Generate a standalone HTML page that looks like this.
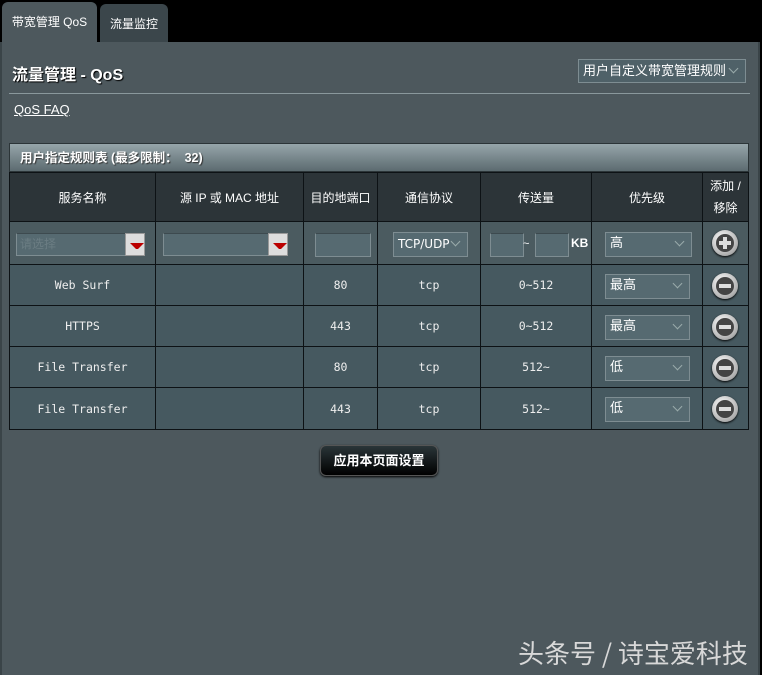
<!DOCTYPE html>
<html><head><meta charset="utf-8"><style>
*{margin:0;padding:0;box-sizing:border-box}
body{width:762px;height:675px;background:#000;position:relative;overflow:hidden;font-family:"Liberation Sans","Noto Sans CJK SC",sans-serif;color:#fff}
.abs{position:absolute}
.tab{position:absolute;top:2px;height:42px;border-radius:6px 6px 0 0;font-size:12px;line-height:40px;text-align:center}
#panel{position:absolute;left:0;top:42px;width:760px;height:633px;background:#4d585d;border-left:2px solid #3a4448;border-right:2px solid #3a4448}
.cell{position:absolute;border-right:1px solid #0d1215;border-bottom:1px solid #0d1215;display:flex;align-items:center;justify-content:center;font-size:12px}
.mono{font-family:"DejaVu Sans Mono","Liberation Mono",monospace;font-size:11.5px;color:#eee}
.sel{position:absolute;background:#566a71;border:1px solid #7e8d92;font-size:13px;color:#fff;padding-left:4px;line-height:20px}
.sel:after{content:"";position:absolute;right:8px;top:5px;width:6px;height:6px;border-right:1px solid #9aa;border-bottom:1px solid #9aa;transform:rotate(45deg)}
.inp{position:absolute;background:#566a71;border:1px solid #7e8d92;border-top-color:#3d4a4f}
.circ{position:absolute;width:26px;height:26px;border-radius:50%;background:radial-gradient(circle at 40% 35%,#fff,#bbb 60%,#888);box-shadow:0 1px 2px #000}
.circ i{position:absolute;left:4px;top:4px;width:18px;height:18px;border-radius:50%;background:#444}
.circ b{position:absolute;left:7px;top:11px;width:12px;height:4px;background:#ddd}
.circ u{position:absolute;left:11px;top:7px;width:4px;height:12px;background:#ddd}
</style></head><body>
<div class="tab" style="left:2px;width:95px;background:#4d585d;">带宽管理 QoS</div>
<div class="tab" style="left:100px;width:68px;background:#3b464b;top:4px;height:40px">流量监控</div>
<div id="panel"></div>
<div class="abs" style="left:12px;top:61px;font-size:16px;font-weight:bold;text-shadow:1px 1px 1px #000">流量管理 - QoS</div>
<div class="sel" style="left:578px;top:59px;width:168px;height:24px;line-height:22px;background:#4f6168">用户自定义带宽管理规则</div>
<div class="abs" style="left:9px;top:93px;width:741px;height:1px;background:#8a989c"></div>
<div class="abs" style="left:14px;top:102px;font-size:13px;text-decoration:underline">QoS FAQ</div>
<div class="abs" style="left:9px;top:143px;width:740px;height:29px;background:linear-gradient(#96a5aa,#5c6b70);border:1px solid #2c3538;font-size:12.5px;font-weight:bold;line-height:28px;padding-left:10px;text-shadow:1px 1px 1px #333">用户指定规则表 (最多限制：&nbsp; 32)</div>
<div class="abs" style="left:9px;top:172px;width:740px;height:258px;border-left:1px solid #0d1215;border-top:1px solid #0d1215"></div>
<div id="t"></div>
<div class="abs" style="left:320px;top:445px;width:118px;height:31px;border-radius:6px;background:linear-gradient(#2a3538,#000);border:1px solid #555;box-shadow:0 1px 2px #000;font-size:13px;font-weight:bold;text-align:center;line-height:30px">应用本页面设置</div>
<div class="abs" style="left:518px;top:634px;font-size:26px;color:#d8d8d8;font-family:'Noto Sans CJK SC',sans-serif">头条号 / 诗宝爱科技</div>
<script>
var cols=[10,156,304,378,481,592,703,749];
var rows=[[173,222,'#2c3438'],[222,265,'#4b5b60'],[265,306,'#465960'],[306,347,'#465960'],[347,388,'#465960'],[388,430,'#465960']];
var hdr=['服务名称','源 IP 或 MAC 地址','目的地端口','通信协议','传送量','优先级','添加 /<br>移除'];
var data=[['Web Surf','','80','tcp','0~512','最高'],['HTTPS','','443','tcp','0~512','最高'],['File Transfer','','80','tcp','512~','低'],['File Transfer','','443','tcp','512~','低']];
var h='';
rows.forEach(function(r,ri){for(var c=0;c<7;c++){var txt='';var cls='cell';
if(ri==0){txt=hdr[c];if(c==6)txt='<span style="line-height:22px;text-align:center">'+txt+'</span>';}
else if(ri>1){var d=data[ri-2];if(c<5){txt=d[c];cls+=' mono';}}
h+='<div class="'+cls+'" style="left:'+cols[c]+'px;top:'+r[0]+'px;width:'+(cols[c+1]-cols[c])+'px;height:'+(r[1]-r[0])+'px;background:'+r[2]+'">'+txt+'</div>';}});
h+='<div class="inp" style="left:16px;top:233px;width:110px;height:23px;color:#6b7d83;font-size:12px;line-height:21px;padding-left:3px">请选择</div><div class="abs" style="left:125px;top:233px;width:20px;height:23px;background:#ddd;border:1px solid #999"><div style="margin:9px 0 0 4px;border-left:6px solid transparent;border-right:6px solid transparent;border-top:6px solid #b00"></div></div>';
h+='<div class="inp" style="left:163px;top:233px;width:106px;height:23px"></div><div class="abs" style="left:268px;top:233px;width:20px;height:23px;background:#ddd;border:1px solid #999"><div style="margin:9px 0 0 4px;border-left:6px solid transparent;border-right:6px solid transparent;border-top:6px solid #b00"></div></div>';
h+='<div class="inp" style="left:315px;top:233px;width:56px;height:24px"></div>';
h+='<div class="sel" style="left:393px;top:232px;width:75px;height:25px;line-height:23px;font-size:12px;overflow:hidden;white-space:nowrap;font-family:\'DejaVu Sans\',sans-serif">TCP/UDP</div>';
h+='<div class="inp" style="left:490px;top:233px;width:34px;height:24px"></div><div class="abs" style="left:523px;top:238px;font-size:11px">~</div><div class="inp" style="left:535px;top:233px;width:34px;height:24px"></div><div class="abs" style="left:571px;top:236px;font-size:12px;font-weight:bold">KB</div>';
h+='<div class="sel" style="left:605px;top:232px;width:87px;height:25px">高</div>';
h+='<div class="circ" style="left:712px;top:230px"><i></i><b></b><u></u></div>';
[265,306,347,388].forEach(function(y,i){h+='<div class="sel" style="left:605px;top:'+(y+9)+'px;width:85px;height:25px">'+data[i][5]+'</div><div class="circ" style="left:712px;top:'+(y+8)+'px"><i></i><b></b></div>';});
document.getElementById('t').innerHTML=h;
</script>
</body></html>
